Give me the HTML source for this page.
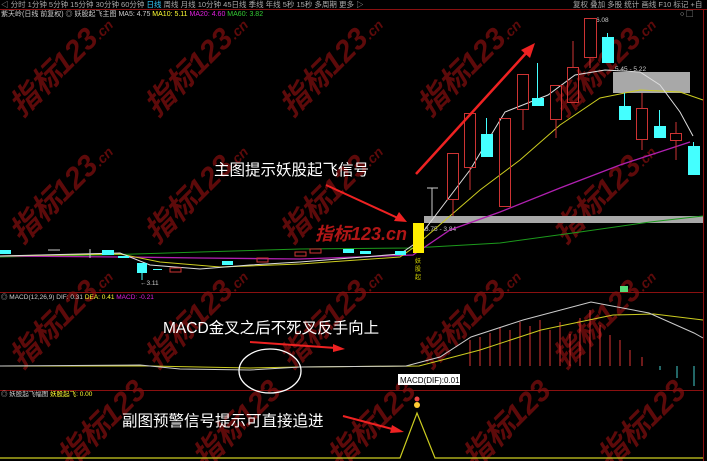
<!DOCTYPE html>
<html><head><meta charset="utf-8"><style>
html,body{margin:0;padding:0;background:#000;width:707px;height:461px;overflow:hidden}
svg{display:block;overflow:hidden}
text{font-family:"Liberation Sans","Noto Sans CJK SC",sans-serif}
</style></head><body>
<svg width="707" height="461" viewBox="0 0 707 461" xmlns="http://www.w3.org/2000/svg">
<rect width="707" height="461" fill="#000"/>
<!-- watermarks -->
<g fill="#6e0c0c" font-size="30" font-weight="bold" font-style="italic" opacity="0.85">
<text transform="translate(22,118) rotate(-45)">指标123<tspan font-size="14">.cn</tspan></text>
<text transform="translate(157,118) rotate(-45)">指标123<tspan font-size="14">.cn</tspan></text>
<text transform="translate(292,118) rotate(-45)">指标123<tspan font-size="14">.cn</tspan></text>
<text transform="translate(430,118) rotate(-45)">指标123<tspan font-size="14">.cn</tspan></text>
<text transform="translate(565,118) rotate(-45)">指标123<tspan font-size="14">.cn</tspan></text>
<text transform="translate(22,245) rotate(-45)">指标123<tspan font-size="14">.cn</tspan></text>
<text transform="translate(157,245) rotate(-45)">指标123<tspan font-size="14">.cn</tspan></text>
<text transform="translate(292,245) rotate(-45)">指标123<tspan font-size="14">.cn</tspan></text>
<text transform="translate(565,245) rotate(-45)">指标123<tspan font-size="14">.cn</tspan></text>
<text transform="translate(22,370) rotate(-45)">指标123<tspan font-size="14">.cn</tspan></text>
<text transform="translate(157,370) rotate(-45)">指标123<tspan font-size="14">.cn</tspan></text>
<text transform="translate(292,370) rotate(-45)">指标123<tspan font-size="14">.cn</tspan></text>
<text transform="translate(430,370) rotate(-45)">指标123<tspan font-size="14">.cn</tspan></text>
<text transform="translate(565,370) rotate(-45)">指标123<tspan font-size="14">.cn</tspan></text>
<text transform="translate(70,470) rotate(-45)">指标123</text>
<text transform="translate(205,470) rotate(-45)">指标123</text>
<text transform="translate(340,470) rotate(-45)">指标123</text>
<text transform="translate(475,470) rotate(-45)">指标123</text>
<text transform="translate(610,470) rotate(-45)">指标123</text>
</g>
<text x="315" y="240" fill="#b01616" font-size="18" font-weight="bold" font-style="italic">指标123.cn</text>
<!-- toolbar -->
<rect x="0" y="0" width="707" height="9" fill="#000"/>
<line x1="0" y1="9.5" x2="707" y2="9.5" stroke="#8a1010"/>
<g font-size="7.5" fill="#aaa">
<text x="1" y="7">◁ 分时  1分钟  5分钟  15分钟  30分钟  60分钟 <tspan fill="#33ccff">日线</tspan>  周线  月线  10分钟  45日线  季线  年线  5秒  15秒  多周期  更多 ▷</text>
<text x="573" y="7">复权 叠加 多股 统计 画线  F10  标记 +自</text>
</g>
<g font-size="7" fill="#ccc">
<text x="1" y="16">紫天岭(日线 前复权) ◎ 妖股起飞主图 MA5: 4.75 <tspan fill="#ffff33">MA10: 5.11</tspan> <tspan fill="#e020e0">MA20: 4.60</tspan> <tspan fill="#33cc33">MA60: 3.82</tspan></text>
<text x="680" y="16">○ ▢</text>
</g>
<line x1="703.5" y1="10" x2="703.5" y2="461" stroke="#8a1010"/>
<line x1="0" y1="292.5" x2="703" y2="292.5" stroke="#8a1010"/>
<line x1="0" y1="390.5" x2="703" y2="390.5" stroke="#8a1010"/>
<!-- gray zones -->
<rect x="424" y="216" width="279" height="7" fill="#a8a8a8"/>
<rect x="613" y="72" width="77" height="21" fill="#a8a8a8"/>
<text x="425" y="231" fill="#ccc" font-size="6.5">3.75 - 3.84</text>
<text x="615" y="71" fill="#ccc" font-size="6.5">5.45 - 5.22</text>
<text x="596" y="22" fill="#ccc" font-size="6.5">6.08</text>
<text x="140" y="285" fill="#ccc" font-size="6.5">←3.11</text>
<!-- MA lines main -->
<polyline fill="none" stroke="#1c9a1c" stroke-width="1" points="0,257 100,255 200,252 300,249 413,248 500,243 580,232 650,222 703,216"/>
<polyline fill="none" stroke="#b020b0" stroke-width="1.3" points="0,256 120,257 200,258 300,259 413,255 450,230 500,212 560,188 620,165 690,142"/>
<polyline fill="none" stroke="#cccc20" stroke-width="1" points="0,256 120,254 160,262 220,267 300,264 400,257 413,248 480,190 520,160 560,125 600,98 640,90 680,92 703,100"/>
<polyline fill="none" stroke="#dddddd" stroke-width="1" points="0,256 120,253 150,265 200,269 250,265 300,262 400,254 413,245 470,170 505,112 548,95 575,75 605,70 640,72 660,85 680,112 693,136"/>
<!-- left small candles -->
<g stroke-width="1">
<rect x="0" y="250" width="11" height="4" fill="#44ffff"/>
<rect x="102" y="250" width="12" height="5" fill="#44ffff"/>
<rect x="118" y="256" width="11" height="2" fill="#44ffff"/>
<rect x="137" y="263" width="10" height="10" fill="#44ffff"/><line x1="142" y1="273" x2="142" y2="280" stroke="#44ffff"/>
<rect x="153" y="269" width="9" height="1" fill="#44ffff"/>
<rect x="170" y="268" width="11" height="4" fill="none" stroke="#cc3333"/>
<rect x="222" y="261" width="11" height="4" fill="#44ffff"/>
<rect x="343" y="249" width="11" height="4" fill="#44ffff"/>
<rect x="360" y="251" width="11" height="3" fill="#44ffff"/>
<rect x="395" y="251" width="11" height="4" fill="#44ffff"/>
<rect x="257" y="258" width="11" height="4" fill="none" stroke="#cc3333"/>
<rect x="295" y="252" width="11" height="4" fill="none" stroke="#cc3333"/>
<rect x="310" y="249" width="11" height="4" fill="none" stroke="#cc3333"/>
<line x1="48" y1="250" x2="60" y2="250" stroke="#ccc"/><line x1="90" y1="249" x2="90" y2="258" stroke="#ccc"/>
</g>
<!-- yellow signal candle -->
<rect x="413" y="223" width="11" height="30" fill="#ffee00"/>
<text x="418" y="263" fill="#dddd00" font-size="6" text-anchor="middle">妖</text>
<text x="418" y="271" fill="#dddd00" font-size="6" text-anchor="middle">股</text>
<text x="418" y="279" fill="#dddd00" font-size="6" text-anchor="middle">起</text>
<!-- right candles -->
<g stroke="#cc3333" stroke-width="1" fill="none">
<line x1="432" y1="188" x2="432" y2="216" stroke="#ccc"/><line x1="427" y1="188" x2="438" y2="188" stroke="#ccc"/>
<rect x="447.5" y="153.5" width="11" height="46"/><line x1="453" y1="200" x2="453" y2="216"/>
<rect x="464.5" y="113.5" width="11" height="54"/><line x1="470" y1="168" x2="470" y2="190"/>
<rect x="499.5" y="118.5" width="11" height="88"/>
<rect x="517.5" y="74.5" width="11" height="35"/><line x1="523" y1="109" x2="523" y2="130"/>
<rect x="550.5" y="85.5" width="11" height="34"/><line x1="556" y1="119" x2="556" y2="138"/>
<rect x="567.5" y="67.5" width="11" height="35"/><line x1="573" y1="41" x2="573" y2="67"/>
<rect x="584.5" y="18.5" width="12" height="39"/><line x1="590" y1="57" x2="590" y2="68"/>
<rect x="636.5" y="108.5" width="11" height="31"/><line x1="642" y1="93" x2="642" y2="108"/><line x1="642" y1="140" x2="642" y2="150"/>
<rect x="670.5" y="133.5" width="11" height="7"/><line x1="676" y1="122" x2="676" y2="133"/><line x1="676" y1="140" x2="676" y2="160"/>
</g>
<g fill="#44ffff">
<rect x="481" y="134" width="12" height="23"/><rect x="486" y="118" width="1" height="16"/>
<rect x="532" y="98" width="12" height="8"/><rect x="537" y="63" width="1" height="35"/>
<rect x="602" y="37" width="12" height="26"/><rect x="607" y="33" width="1" height="4"/>
<rect x="619" y="106" width="12" height="14"/><rect x="624" y="93" width="1" height="13"/>
<rect x="654" y="126" width="12" height="12"/><rect x="659" y="110" width="1" height="16"/>
<rect x="688" y="146" width="12" height="29"/><rect x="693" y="142" width="1" height="4"/>
</g>
<rect x="620" y="286" width="8" height="6" fill="#55dd77"/>
<!-- annotations main -->
<text x="214" y="175" fill="#fff" font-size="15.5">主图提示妖股起飞信号</text>
<line x1="326" y1="185" x2="400" y2="219" stroke="#ee2222" stroke-width="2"/>
<polygon points="407,222 394,221 399,212" fill="#ee2222"/>
<line x1="416" y1="174" x2="528" y2="51" stroke="#ee2222" stroke-width="2.5"/>
<polygon points="535,43 530,58 521,50" fill="#ee2222"/>
<!-- MACD panel -->
<text x="1" y="299" fill="#ccc" font-size="6.5">◎ MACD(12,26,9) DIF: 0.31 <tspan fill="#ffff33">DEA: 0.41</tspan> <tspan fill="#e020e0">MACD: -0.21</tspan></text>
<g stroke="#dd3333" stroke-width="1">
<line x1="470" y1="366" x2="470" y2="340"/><line x1="480" y1="366" x2="480" y2="337"/><line x1="490" y1="366" x2="490" y2="333"/>
<line x1="500" y1="366" x2="500" y2="328"/><line x1="510" y1="366" x2="510" y2="330"/><line x1="520" y1="366" x2="520" y2="322"/>
<line x1="530" y1="366" x2="530" y2="326"/><line x1="540" y1="366" x2="540" y2="320"/><line x1="550" y1="366" x2="550" y2="330"/>
<line x1="560" y1="366" x2="560" y2="322"/><line x1="570" y1="366" x2="570" y2="334"/><line x1="580" y1="366" x2="580" y2="318"/>
<line x1="590" y1="366" x2="590" y2="310"/><line x1="600" y1="366" x2="600" y2="325"/><line x1="610" y1="366" x2="610" y2="335"/>
<line x1="620" y1="366" x2="620" y2="340"/><line x1="630" y1="366" x2="630" y2="350"/><line x1="642" y1="366" x2="642" y2="357"/>
</g>
<g stroke="#44cccc" stroke-width="1"><line x1="660" y1="366" x2="660" y2="370"/><line x1="677" y1="366" x2="677" y2="378"/><line x1="694" y1="366" x2="694" y2="386"/></g>
<polyline fill="none" stroke="#cccc20" stroke-width="1" points="0,366 150,366 250,368 300,367 419,366 480,350 541,330 613,315 654,314 703,320"/>
<polyline fill="none" stroke="#cccccc" stroke-width="1" points="0,366 140,365 180,369 250,370 300,367 406,366 440,357 471,337 523,320 591,302 649,313 694,333 703,338"/>
<ellipse cx="270" cy="371" rx="31" ry="22" fill="none" stroke="#fff" stroke-width="1.3"/>
<rect x="398" y="374" width="62" height="11" fill="#fff"/>
<text x="400" y="383" fill="#000" font-size="8">MACD(DIF):0.01</text>
<text x="163" y="333" fill="#fff" font-size="15.5">MACD金叉之后不死叉反手向上</text>
<line x1="250" y1="342" x2="336" y2="348" stroke="#ee2222" stroke-width="2"/>
<polygon points="345,349 333,344 333,352" fill="#ee2222"/>
<!-- sub panel -->
<text x="1" y="396" fill="#ccc" font-size="6.5">◎ 妖股起飞幅图 <tspan fill="#ffff33">妖股起飞: 0.00</tspan></text>
<polyline fill="none" stroke="#cccc20" stroke-width="1.2" points="0,458 400,458 417,413 435,458 703,458"/>
<circle cx="417" cy="405" r="3" fill="#ffcc33"/>
<circle cx="417" cy="399" r="2.5" fill="#ee4444"/>
<text x="122" y="426" fill="#fff" font-size="15.5">副图预警信号提示可直接追进</text>
<line x1="343" y1="416" x2="396" y2="430" stroke="#ee2222" stroke-width="2"/>
<polygon points="404,432 392,425 390,433" fill="#ee2222"/>
</svg>
</body></html>
